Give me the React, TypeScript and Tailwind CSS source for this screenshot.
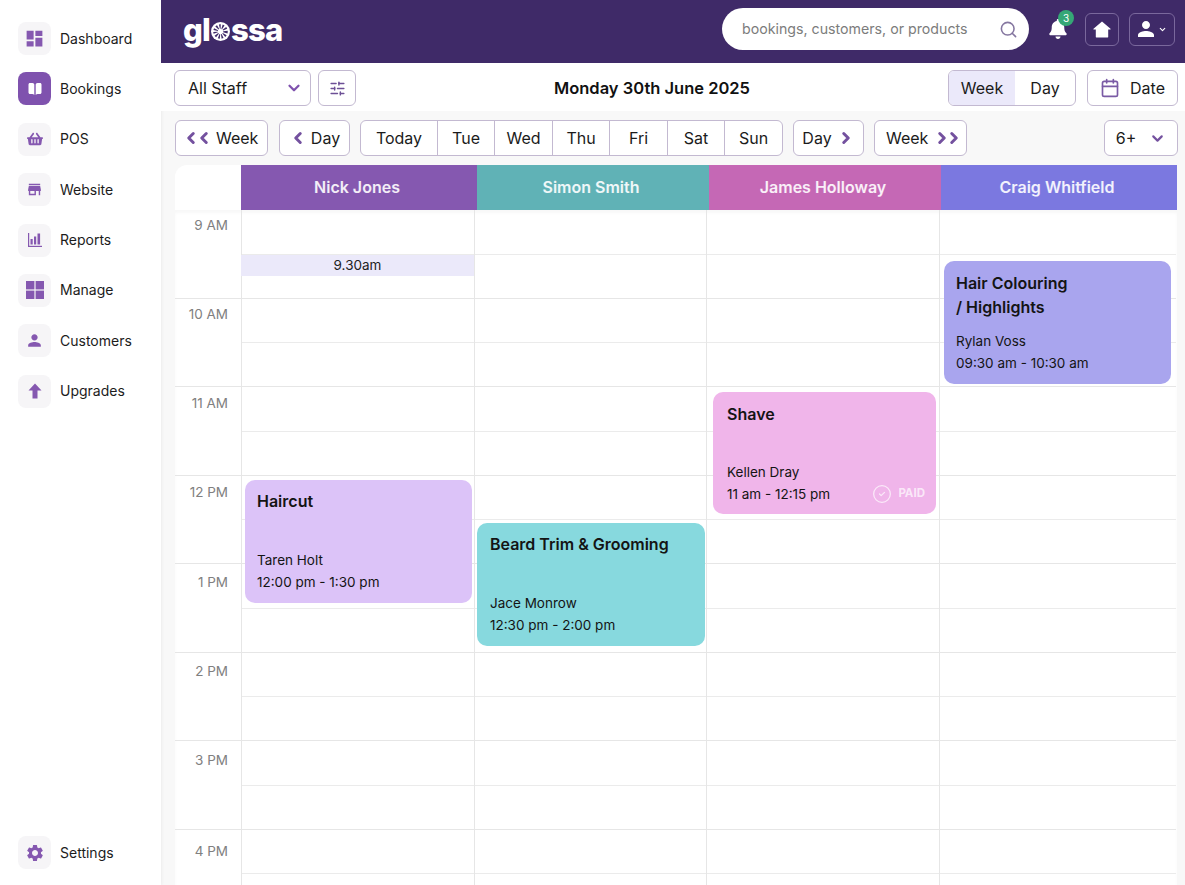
import { Search, SlidersHorizontal, Calendar, ChevronDown, ChevronLeft, ChevronRight, CircleCheck } from "lucide-react";
import { FaBell, FaShoppingBasket } from "react-icons/fa";
import { MdDashboard, MdStore, MdPerson, MdSettings } from "react-icons/md";
import type { ReactNode } from "react";

const font = { fontFamily: "Inter, 'Noto Sans', sans-serif" };

function BookIcon() {
  return (
    <svg width="16" height="16" viewBox="0 0 16 16" fill="currentColor">
      <path d="M1.5 3.5C1.5 2.7 2.1 2 3 2h2.5c1 0 1.8.8 1.8 1.8V14c-.5-.6-1.200-1-2-1H3c-.8 0-1.500-.7-1.500-1.500z" />
      <path d="M14.500 3.500C14.500 2.700 13.900 2 13 2h-2.500c-1 0-1.800.8-1.800 1.800V14c.5-.6 1.200-1 2-1H13c.8 0 1.500-.7 1.500-1.500z" />
    </svg>
  );
}

function ReportsIcon() {
  return (
    <svg width="16" height="16" viewBox="0 0 16 16" fill="currentColor">
      <rect x="1" y="1" width="1.200" height="14" />
      <rect x="1" y="13.800" width="14" height="1.200" />
      <rect x="3.500" y="7" width="2.200" height="5.500" />
      <rect x="7" y="4.500" width="2.200" height="8" />
      <rect x="10.500" y="1.500" width="2.600" height="11" />
    </svg>
  );
}

function ManageIcon() {
  return (
    <svg width="18" height="18" viewBox="0 0 18 18" fill="currentColor">
      <rect x="0" y="0" width="8.400" height="8.400" />
      <rect x="9.600" y="0" width="8.400" height="8.400" />
      <rect x="0" y="9.600" width="8.400" height="8.400" />
      <rect x="9.600" y="9.600" width="8.400" height="8.400" />
    </svg>
  );
}

function UpIcon() {
  return (
    <svg width="14" height="16" viewBox="0 0 14 16" fill="currentColor">
      <path d="M7 .5 13.500 7.500H9.500V15.500H4.500V7.500H.5z" />
    </svg>
  );
}

function HomeIcon() {
  return (
    <svg width="18" height="17" viewBox="0 0 18 17" fill="currentColor">
      <path d="M9 .5 17.500 7.800c.3.3.1.7-.3.7H15.200V16c0 .3-.2.500-.5.500H3.300c-.3 0-.5-.2-.5-.5V8.500H.8c-.4 0-.6-.4-.3-.7z" />
    </svg>
  );
}

const nav = [
  { label: "Dashboard", icon: <MdDashboard size={21} /> },
  { label: "Bookings", icon: <BookIcon />, active: true },
  { label: "POS", icon: <FaShoppingBasket size={16} /> },
  { label: "Website", icon: <MdStore size={17} /> },
  { label: "Reports", icon: <ReportsIcon /> },
  { label: "Manage", icon: <ManageIcon /> },
  { label: "Customers", icon: <MdPerson size={19} /> },
  { label: "Upgrades", icon: <UpIcon /> },
];

function NavItem({ label, icon, active }: { label: string; icon: ReactNode; active?: boolean }) {
  return (
    <div className="flex items-center gap-[9px] h-[33px]">
      <div className={active ? "w-[33px] h-[33px] rounded-lg flex items-center justify-center bg-[#7f52ae] text-white" : "w-[33px] h-[33px] rounded-lg flex items-center justify-center bg-[#f6f5f7] text-[#8558b0]"}>
        {icon}
      </div>
      <span className="text-[14px] text-[#1c1c1c] -mt-px">{label}</span>
    </div>
  );
}

function Btn({ className, children }: { className: string; children: ReactNode }) {
  return (
    <div className={"h-[36px] flex items-center bg-white border border-[#c3b9d1] rounded-md text-[16px] text-[#1b1b1b] " + className}>
      {children}
    </div>
  );
}

const days = [
  { label: "Today", w: "w-[77px]" },
  { label: "Tue", w: "w-[57px]" },
  { label: "Wed", w: "w-[58px]" },
  { label: "Thu", w: "w-[57px]" },
  { label: "Fri", w: "w-[58px]" },
  { label: "Sat", w: "w-[57px]" },
  { label: "Sun", w: "w-[57px]" },
];

const hours = [
  { label: "9 AM", pt: 6 },
  { label: "10 AM", pt: 6.5 },
  { label: "11 AM", pt: 7 },
  { label: "12 PM", pt: 7.5 },
  { label: "1 PM", pt: 9 },
  { label: "2 PM", pt: 9.5 },
  { label: "3 PM", pt: 10 },
  { label: "4 PM", pt: 12.5 },
];

const staff = [
  { name: "Nick Jones", cls: "w-[236px] bg-[#8558b0]" },
  { name: "Simon Smith", cls: "w-[232px] bg-[#60b2b6]" },
  { name: "James Holloway", cls: "w-[232px] bg-[#c568b5]" },
  { name: "Craig Whitfield", cls: "w-[236px] bg-[#7b78e0]" },
];

const events = [
  { title: "Haircut", who: "Taren Holt", time: "12:00 pm - 1:30 pm", cls: "left-[70px] top-[270px] w-[227px] h-[123px] pl-[12px] bg-[#dcc3f8]", head: "pt-[9px]", foot: "pb-[10px]" },
  { title: "Beard Trim & Grooming", who: "Jace Monrow", time: "12:30 pm - 2:00 pm", cls: "left-[302px] top-[313px] w-[228px] h-[123px] pl-[13px] bg-[#87d9de]", head: "pt-[9px]", foot: "pb-[10px]" },
  { title: "Shave", who: "Kellen Dray", time: "11 am - 12:15 pm", cls: "left-[538px] top-[182px] w-[223px] h-[122px] pl-[14px] bg-[#f0b5ea]", head: "pt-[10px]", foot: "pb-[9px]", paid: true },
  { title: "Hair Colouring\n/ Highlights", who: "Rylan Voss", time: "09:30 am - 10:30 am", cls: "left-[769px] top-[51px] w-[227px] h-[123px] pl-[12px] bg-[#a9a5ee]", head: "pt-[10px]", foot: "pb-[10px]" },
];

export default function App() {
  return (
    <div style={font} className="flex w-[1185px] h-[885px] overflow-hidden bg-[#f8f8f8]">
      <aside className="w-[161px] shrink-0 h-full bg-white flex flex-col pl-[18px] pt-[22px] pb-[16px] shadow-[1px_0_3px_rgba(0,0,0,0.05)]">
        <div className="flex flex-col gap-[17.400px]">
          {nav.map((n) => (
            <NavItem key={n.label} {...n} />
          ))}
        </div>
        <div className="mt-auto">
          <NavItem label="Settings" icon={<MdSettings size={20} />} />
        </div>
      </aside>

      <main className="flex-1 min-w-0 flex flex-col">
        <header className="h-[63px] shrink-0 bg-[#3f2a68] flex items-center pl-[22px] pr-[10px] pb-[5px]">
          <div className="flex items-center text-white text-[31px] font-extrabold tracking-[-0.8px] leading-none">
            <span>gl</span>
            <svg width="19" height="19" viewBox="0 0 21 21" className="mx-[1px] mt-[4px]">
              <circle cx="10.500" cy="10.500" r="10.500" fill="#ffffff" />
              <circle cx="10.500" cy="10.500" r="5.500" fill="none" stroke="#3f2a68" strokeWidth="5" strokeDasharray="1.500 1.500" />
            </svg>
            <span>ssa</span>
          </div>
          <div className="ml-auto w-[307px] h-[42px] rounded-full bg-white flex items-center pl-[20px] pr-[11px] text-[14.200px] text-[#7c7c7c]">
            <span className="flex-1">bookings, customers, or products</span>
            <Search size={19} className="text-[#8577a0]" />
          </div>
          <div className="relative ml-[19px] w-[20px] flex justify-center text-white">
            <FaBell size={20} />
            <span className="absolute -top-[9px] left-[10px] w-[16px] h-[16px] rounded-full bg-[#35a776] text-white text-[10px] flex items-center justify-center">3</span>
          </div>
          <div className="ml-[17px] w-[34px] h-[33px] rounded-md border border-[#7a689c] flex items-center justify-center text-white">
            <HomeIcon />
          </div>
          <div className="ml-[10px] w-[46px] h-[33px] rounded-md border border-[#7a689c] flex items-center justify-center text-white">
            <MdPerson size={24} className="-ml-[3px]" />
            <ChevronDown size={9} strokeWidth={3} />
          </div>
        </header>

        <div className="h-[48px] shrink-0 bg-white flex items-center pt-[2px] pl-[13px] pr-[7px]">
          <Btn className="w-[137px] justify-between pl-[13px] pr-[7px]">
            <span>All Staff</span>
            <ChevronDown size={18} strokeWidth={3} className="text-[#7f52ae]" />
          </Btn>
          <Btn className="w-[38px] ml-[7px] justify-center">
            <SlidersHorizontal size={17} className="text-[#6d4f96]" />
          </Btn>
          <div className="flex-1 text-center font-semibold text-[16.500px] text-[#111]">Monday 30th June 2025</div>
          <div className="h-[36px] w-[128px] flex border border-[#c3b9d1] rounded-md overflow-hidden text-[16px] text-[#1b1b1b] bg-white">
            <div className="w-[66px] bg-[#ebe9fa] flex items-center justify-center">Week</div>
            <div className="flex-1 flex items-center justify-center">Day</div>
          </div>
          <Btn className="w-[91px] ml-[11px] gap-[10px] justify-center">
            <Calendar size={20} className="text-[#7a5ba5]" />
            <span>Date</span>
          </Btn>
        </div>

        <div className="h-[54px] shrink-0 flex items-center pl-[14px] pr-[7px] gap-[10px]">
          <Btn className="w-[93px] gap-[3px] pl-[6px]">
            <span className="flex -space-x-[5px] text-[#74519f]">
              <ChevronLeft size={18} strokeWidth={4} />
              <ChevronLeft size={18} strokeWidth={4} />
            </span>
            <span>Week</span>
          </Btn>
          <Btn className="w-[71px] gap-[4px] justify-center ml-px">
            <ChevronLeft size={18} strokeWidth={4} className="text-[#74519f]" />
            <span>Day</span>
          </Btn>
          <div className="h-[36px] flex bg-white border border-[#c3b9d1] rounded-md overflow-hidden text-[16px] text-[#1b1b1b] divide-x divide-[#c3b9d1]">
            {days.map((d) => (
              <div key={d.label} className={d.w + " flex items-center justify-center"}>
                {d.label}
              </div>
            ))}
          </div>
          <Btn className="w-[71px] gap-[5px] justify-center">
            <span>Day</span>
            <ChevronRight size={18} strokeWidth={4} className="text-[#74519f]" />
          </Btn>
          <Btn className="w-[93px] gap-[5px] pl-[11px]">
            <span>Week</span>
            <span className="flex -space-x-[6px] text-[#74519f]">
              <ChevronRight size={18} strokeWidth={4} />
              <ChevronRight size={18} strokeWidth={4} />
            </span>
          </Btn>
          <Btn className="w-[74px] ml-auto gap-[13px] justify-center">
            <span>6+</span>
            <ChevronDown size={17} strokeWidth={3} className="text-[#74519f]" />
          </Btn>
        </div>

        <div className="ml-[14px] mr-[8px] flex-1 min-h-0 flex flex-col">
          <div className="h-[45px] shrink-0 flex">
            <div className="w-[66px] bg-white rounded-tl-xl" />
            {staff.map((s) => (
              <div key={s.name} className={s.cls + " flex items-center justify-center pr-[4px] pb-[2px] text-white/90 font-semibold text-[16px]"}>
                {s.name}
              </div>
            ))}
          </div>
          <div className="relative flex-1 min-h-0 overflow-hidden bg-white shadow-[inset_0_3px_3px_rgba(0,0,0,0.03)]">
            {hours.map((h) => (
              <div key={h.label} className="flex h-[88.500px]">
                <div style={{ paddingTop: h.pt }} className="w-[66px] shrink-0 border-b border-[#e6e6e6] text-right pr-[13px] text-[13.500px] text-[#808080] leading-[18px]">{h.label}</div>
                {[233, 232, 233, 237].map((w, i) => (
                  <div key={i} style={{ width: w }} className="shrink-0 flex flex-col border-l border-[#e6e6e6]">
                    <div className="h-[44.500px] border-b border-[#ebebeb]" />
                    <div className="h-[44px] border-b border-[#e6e6e6]" />
                  </div>
                ))}
              </div>
            ))}
            <div className="absolute left-[66px] top-[45px] w-[233px] h-[21px] bg-[#ebe9fa] flex items-center justify-center text-[13.500px] text-[#222]">9.30am</div>
            {events.map((e) => (
              <div key={e.title} className={"absolute rounded-[10px] pr-[10px] flex flex-col text-[#141414] " + e.cls}>
                <div className={"text-[16px] font-semibold leading-[24px] whitespace-pre-line " + e.head}>{e.title}</div>
                <div className={"mt-auto text-[13.500px] leading-[22px] " + e.foot}>
                  <div>{e.who}</div>
                  <div>{e.time}</div>
                </div>
                {e.paid && (
                  <div className="absolute right-[11px] bottom-[10px] flex items-center gap-[6px] text-white/70 text-[11.500px] font-bold">
                    <CircleCheck size={20} strokeWidth={1.500} />
                    <span>PAID</span>
                  </div>
                )}
              </div>
            ))}
          </div>
        </div>
      </main>
    </div>
  );
}
